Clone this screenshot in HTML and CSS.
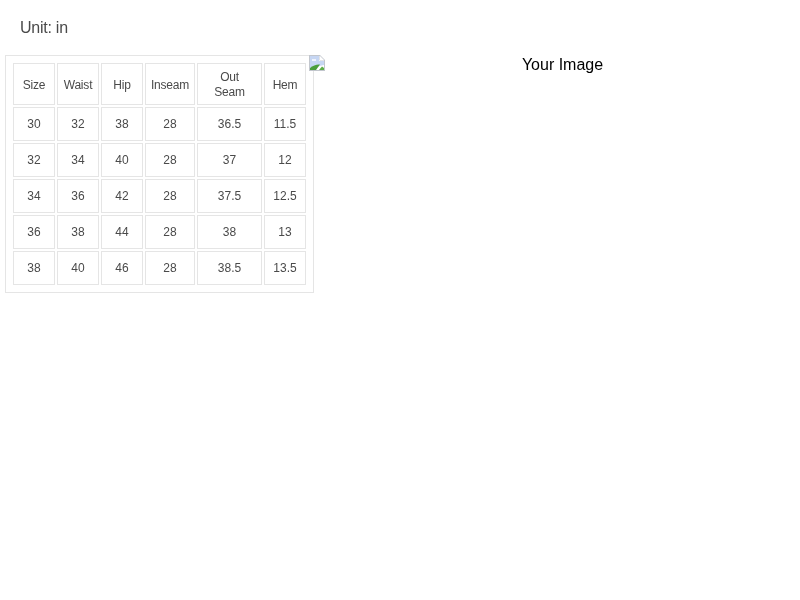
FILE: index.html
```html
<!DOCTYPE html>
<html lang="en">
<head>
<meta charset="utf-8">
<title>Size chart</title>
<link rel="stylesheet" href="styles.css">
</head>
<body>
<div class="page">
<p class="unit">Unit: in</p>
<div class="content">
  <table class="chart">
    <colgroup>
      <col class="c-narrow"><col class="c-narrow"><col class="c-narrow"><col class="c-inseam"><col class="c-out"><col class="c-narrow">
    </colgroup>
    <thead>
      <tr><th>Size</th><th>Waist</th><th>Hip</th><th>Inseam</th><th>Out<br>Seam</th><th>Hem</th></tr>
    </thead>
    <tbody>
      <tr><td>30</td><td>32</td><td>38</td><td>28</td><td>36.5</td><td>11.5</td></tr>
      <tr><td>32</td><td>34</td><td>40</td><td>28</td><td>37</td><td>12</td></tr>
      <tr><td>34</td><td>36</td><td>42</td><td>28</td><td>37.5</td><td>12.5</td></tr>
      <tr><td>36</td><td>38</td><td>44</td><td>28</td><td>38</td><td>13</td></tr>
      <tr><td>38</td><td>40</td><td>46</td><td>28</td><td>38.5</td><td>13.5</td></tr>
    </tbody>
  </table>
  <div class="picture">
    <svg class="broken" width="16" height="16" viewBox="0 0 16 16" aria-hidden="true">
      <path d="M0 0H11L16 5V16H0Z" fill="#c2c6cd"/>
      <path d="M1 1H10.5V5.5H15V15H1Z" fill="#fff"/>
      <path d="M1 1H10V6H15V10L1 13Z" fill="#c6d6f3"/>
      <path d="M3 4H7V6H3Z" fill="#eef3fc"/>
      <path d="M1 15V13C4 10.5 8 9 11 9.5L7 15Z" fill="#4a9e3c"/>
      <path d="M10 15L13 11.5L15 13V15Z" fill="#5cae48"/>
      <path d="M11 1L15 5H11Z" fill="#fff"/>
    </svg>
    <span class="alt">Your Image</span>
  </div>
</div>
</div>
</body>
</html>
```
FILE: styles.css
```css
html, body {
  margin: 0;
  padding: 0;
  background: #fff;
}

body {
  font-family: "Liberation Sans", Arial, sans-serif;
  color: #000;
}

.page {
  will-change: transform;
}

.unit {
  margin: 0;
  padding: 18px 20px 0;
  height: 37px;
  box-sizing: border-box;
  font-size: 16px;
  line-height: 19px;
  letter-spacing: -0.25px;
  color: #4a4a4a;
}

.content {
  display: flex;
  align-items: flex-start;
  margin-top: 18px;
  padding-left: 5px;
}

.chart {
  flex: none;
  table-layout: fixed;
  width: 309px;
  box-sizing: border-box;
  border: 1px solid #e5e5e5;
  border-collapse: separate;
  border-spacing: 2px;
  padding: 5px;
  font-size: 12px;
  line-height: 16px;
  text-align: center;
  color: #4a4a4a;
}

.c-narrow { width: 42px; }
.c-inseam { width: 50px; }
.c-out { width: 65px; }

.chart th,
.chart td {
  border: 1px solid #e5e5e5;
  padding: 8px 0;
  font-weight: normal;
  text-align: center;
}

.chart th {
  padding: 6px 0 4px;
  height: 30px;
  line-height: 15px;
  letter-spacing: -0.2px;
}

.picture {
  flex: 1;
  display: flex;
  align-items: flex-start;
  margin-left: -5px;
  font-size: 16px;
  line-height: 18px;
}

.broken {
  flex: none;
  display: block;
}

.alt {
  flex: 1;
  text-align: center;
  padding-top: 1px;
}
```
